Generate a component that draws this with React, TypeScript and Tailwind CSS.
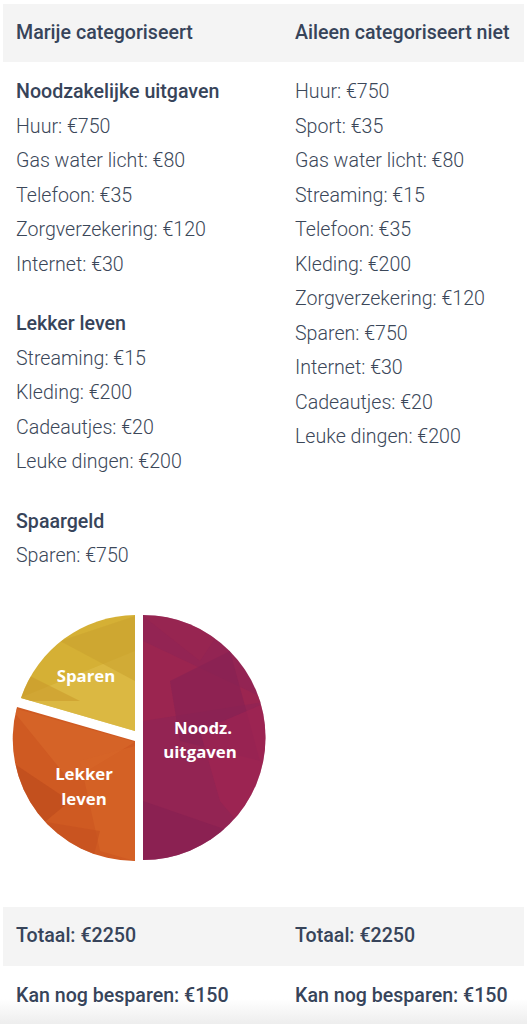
import React from "react";

const left = [
  { title: "Noodzakelijke uitgaven", items: ["Huur: €750", "Gas water licht: €80", "Telefoon: €35", "Zorgverzekering: €120", "Internet: €30"] },
  { title: "Lekker leven", items: ["Streaming: €15", "Kleding: €200", "Cadeautjes: €20", "Leuke dingen: €200"] },
  { title: "Spaargeld", items: ["Sparen: €750"] },
];

const right = [
  "Huur: €750",
  "Sport: €35",
  "Gas water licht: €80",
  "Streaming: €15",
  "Telefoon: €35",
  "Kleding: €200",
  "Zorgverzekering: €120",
  "Sparen: €750",
  "Internet: €30",
  "Cadeautjes: €20",
  "Leuke dingen: €200",
];

function Pie() {
  const magenta = "M143,614 A122,122 0 0 1 143,859 Z";
  const yellow = "M135,730 L135,614 A122,122 0 0 0 21,697 Z";
  const orange = "M135,740 L17,706 A122,122 0 0 0 135,860 Z";
  return (
    <svg width="280" height="333" viewBox="0 0 280 333" className="block">
      <defs>
        <clipPath id="cm"><path d={magenta} /></clipPath>
        <clipPath id="cy"><path d={yellow} /></clipPath>
        <clipPath id="co"><path d={orange} /></clipPath>
      </defs>
      <g transform="translate(-3,-573)">
        <path d={magenta} fill="#932453" />
        <g clipPath="url(#cm)">
          <polygon points="143,640 270,700 143,720" fill="#a0264f" opacity="0.6" />
          <polygon points="170,680 230,650 260,760 180,740" fill="#862153" opacity="0.6" />
          <polygon points="200,730 270,700 270,860 220,800" fill="#a62452" opacity="0.5" />
          <polygon points="143,800 230,830 180,870 143,860" fill="#852052" opacity="0.6" />
          <polygon points="143,615 230,615 200,660" fill="#9c2550" opacity="0.5" />
        </g>
        <path d={yellow} fill="#d5b035" />
        <g clipPath="url(#cy)">
          <polygon points="20,697 135,650 135,731" fill="#ddbc48" opacity="0.7" />
          <polygon points="60,640 135,615 135,680" fill="#c9a22f" opacity="0.6" />
          <polygon points="20,670 80,700 20,700" fill="#c99a2c" opacity="0.6" />
        </g>
        <path d={orange} fill="#cf5a22" />
        <g clipPath="url(#co)">
          <polygon points="10,706 135,741 70,780" fill="#d9692b" opacity="0.6" />
          <polygon points="80,760 135,745 135,860 100,850" fill="#d76628" opacity="0.6" />
          <polygon points="10,760 70,800 10,850" fill="#be4c1d" opacity="0.7" />
          <polygon points="40,820 100,830 90,870 30,870" fill="#c5501f" opacity="0.6" />
        </g>
        <g fill="#ffffff" fontFamily="'Open Sans', sans-serif" fontWeight="700" fontSize="16.8" textAnchor="middle">
          <text x="86" y="681">Sparen</text>
          <text x="203" y="733">Noodz.</text>
          <text x="200" y="757">uitgaven</text>
          <text x="84" y="779">Lekker</text>
          <text x="84" y="804">leven</text>
        </g>
      </g>
    </svg>
  );
}

export default function App() {
  return (
    <div className="w-[527px] h-[1024px] overflow-hidden bg-white pt-[4px] px-[3px] text-[#3b4759]" style={{ fontFamily: "Roboto, 'Liberation Sans', sans-serif" }}>
      <div className="flex h-[58px] items-center bg-[#f4f4f4] text-[19.6px] font-medium text-[#37445a]">
        <div className="w-[279px] pl-[13px]">Marije categoriseert</div>
        <div className="flex-1 pl-[13px]">Aileen categoriseert niet</div>
      </div>
      <div className="flex pt-[13px] text-[19.6px] leading-[34.5px] font-light">
        <div className="w-[279px] pl-[13px]">
          {left.map((g, i) => (
            <div key={g.title} className={i > 0 ? "mt-[25px]" : ""}>
              <div className="font-medium text-[#37445a]">{g.title}</div>
              {g.items.map((it) => (
                <div key={it}>{it}</div>
              ))}
            </div>
          ))}
          <div className="-ml-[13px]">
            <Pie />
          </div>
        </div>
        <div className="flex-1 pl-[13px]">
          {right.map((it) => (
            <div key={it}>{it}</div>
          ))}
        </div>
      </div>
      <div className="flex h-[59px] items-center bg-[#f4f4f4] text-[19.6px] font-medium text-[#37445a]">
        <div className="w-[279px] pl-[13px]">Totaal: €2250</div>
        <div className="flex-1 pl-[13px]">Totaal: €2250</div>
      </div>
      <div className="-mx-[3px] flex h-[60px] items-center bg-[linear-gradient(to_bottom,#ffffff_0%,#ffffff_55%,#ececec_100%)] px-[3px] text-[19.6px] font-medium text-[#37445a]">
        <div className="w-[279px] pl-[13px]">Kan nog besparen: €150</div>
        <div className="flex-1 pl-[13px]">Kan nog besparen: €150</div>
      </div>
    </div>
  );
}
